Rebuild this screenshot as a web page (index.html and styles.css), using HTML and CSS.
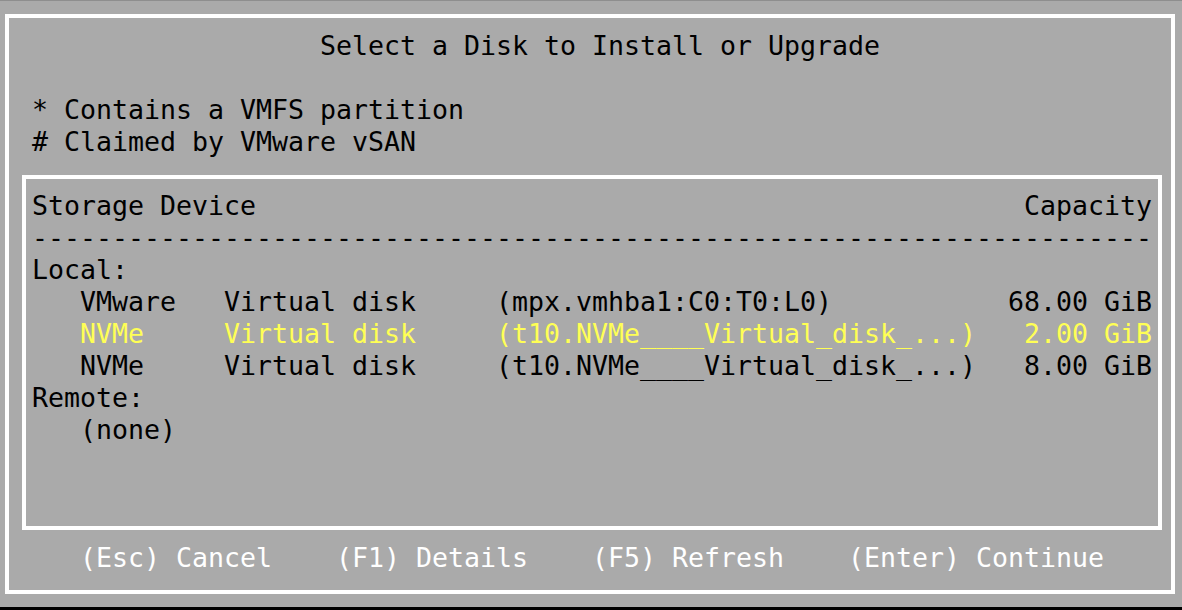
FILE: index.html
```html
<!DOCTYPE html>
<html lang="en">

<head>
    <meta charset="UTF-8">
    <meta name="viewport" content="width=device-width, initial-scale=1.0">
    <title>Select a Disk to Install or Upgrade</title>
    <link rel="stylesheet" href="styles.css">
</head>

<body>
    <div class="screen">
        <div class="frame">
            <h1 class="title">Select a Disk to Install or Upgrade</h1>
            <div class="legend">
                <p>* Contains a VMFS partition</p>
                <p># Claimed by VMware vSAN</p>
            </div>
            <div class="devices">
                <div class="head">
                    <span>Storage Device</span>
                    <span>Capacity</span>
                </div>
                <div class="rule">----------------------------------------------------------------------</div>
                <div class="group">Local:</div>
                <div class="disk">
                    <span>VMware</span>
                    <span>Virtual disk</span>
                    <span>(mpx.vmhba1:C0:T0:L0)</span>
                    <span class="size">68.00 GiB</span>
                </div>
                <div class="disk selected">
                    <span>NVMe</span>
                    <span>Virtual disk</span>
                    <span>(t10.NVMe____Virtual_disk_...)</span>
                    <span class="size">2.00 GiB</span>
                </div>
                <div class="disk">
                    <span>NVMe</span>
                    <span>Virtual disk</span>
                    <span>(t10.NVMe____Virtual_disk_...)</span>
                    <span class="size">8.00 GiB</span>
                </div>
                <div class="group">Remote:</div>
                <div class="empty">(none)</div>
            </div>
            <div class="keys">
                <span>(Esc) Cancel</span>
                <span>(F1) Details</span>
                <span>(F5) Refresh</span>
                <span>(Enter) Continue</span>
            </div>
        </div>
    </div>
</body>

</html>
```

FILE: styles.css
```css
* {
    margin: 0;
    padding: 0;
    box-sizing: border-box;
}

html,
body {
    height: 610px;
    background: #000;
    overflow: hidden;
}

body {
    color: #000;
    font-family: "DejaVu Sans Mono", "Liberation Mono", monospace;
    font-size: 26.58px;
    line-height: 32px;
}

.screen {
    height: 607px;
    background: #aaaaaa;
    border-top: 1px solid #8e8e8e;
    padding: 13px 7px 0 5px;
}

.frame {
    height: 580px;
    border: 4px solid #fff;
    padding: 12px 9px 0 13px;
}

.title {
    font-size: inherit;
    font-weight: normal;
    line-height: 32px;
    padding-left: calc(10px + 18ch);
}

.legend {
    margin-top: 32px;
    padding-left: 10px;
}

.devices {
    margin-top: 17px;
    height: 355px;
    border: 4px solid #fff;
    padding: 11px 6px 0 6px;
}

.head {
    display: flex;
    justify-content: space-between;
}

.rule {
    overflow: hidden;
    white-space: nowrap;
}

.disk {
    display: grid;
    grid-template-columns: 9ch 17ch 1fr auto;
    padding-left: 3ch;
    white-space: nowrap;
}

.disk.selected {
    color: #ffff55;
}

.empty {
    padding-left: 3ch;
}

.keys {
    margin-top: 12px;
    padding-left: calc(10px + 3ch);
    display: flex;
    gap: 4ch;
    color: #fff;
    white-space: nowrap;
}
```
